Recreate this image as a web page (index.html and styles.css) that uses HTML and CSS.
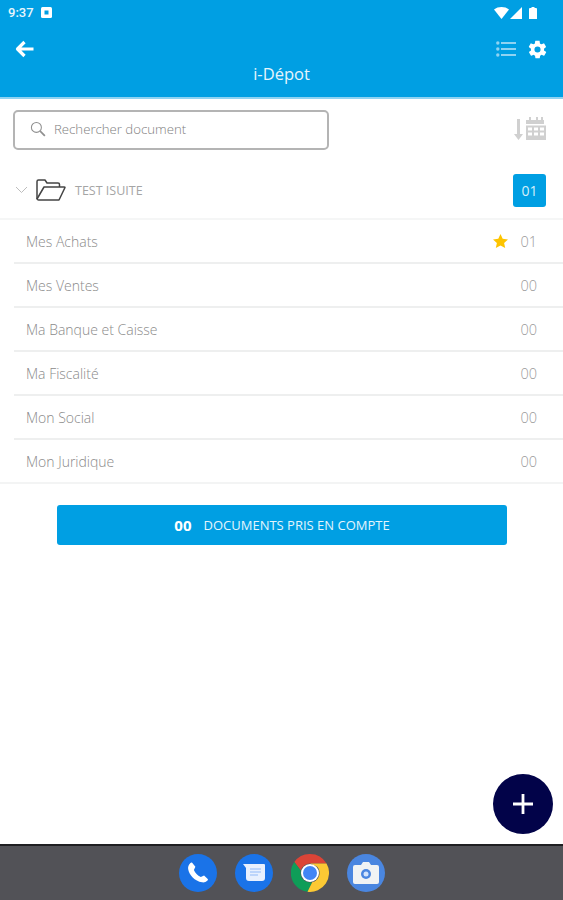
FILE: index.html
```html
<!DOCTYPE html>
<html lang="fr">
<head>
    <meta charset="UTF-8">
    <meta name="viewport" content="width=device-width, initial-scale=1.0">
    <title>i-Dépot</title>
    <link rel="stylesheet" href="styles.css">
</head>
<body>
<div class="page">
    <header class="appbar">
        <div class="statusbar">
            <div class="status-left">
                <span class="clock">9:37</span>
                <svg width="11" height="11" viewBox="0 0 11 11"><rect width="11" height="11" rx="1.5" fill="#fff"/><rect x="3.5" y="3.5" width="4" height="4" fill="#009fe3"/></svg>
            </div>
            <div class="status-right">
                <svg width="15" height="12" viewBox="0 0 15 12"><path d="M0 2.5C4 -.8 11 -.8 15 2.5L7.500 12z" fill="#fff"/></svg>
                <svg class="signal" width="12" height="12" viewBox="0 0 12 12"><path d="M12 0V12H0z" fill="#fff"/></svg>
                <svg width="8" height="12" viewBox="0 0 8 12"><path d="M2.500 0h3v1H7a1 1 0 0 1 1 1v10H0V2a1 1 0 0 1 1-1h1.500z" fill="#fff"/></svg>
            </div>
        </div>
        <div class="toolbar">
            <svg width="20" height="18" viewBox="0 0 20 18"><path d="M18.500 9H3M9.500 2L2.500 9l7 7" fill="none" stroke="#fff" stroke-width="3.200" stroke-linejoin="round"/></svg>
            <div class="toolbar-actions">
                <svg width="20" height="18" viewBox="0 0 20 18" fill="#8fd3f2"><circle cx="1.800" cy="3" r="1.700"/><circle cx="1.800" cy="9" r="1.700"/><circle cx="1.800" cy="15" r="1.700"/><rect x="5" y="2" width="15" height="2"/><rect x="5" y="8" width="15" height="2"/><rect x="5" y="14" width="15" height="2"/></svg>
                <svg width="21" height="21" viewBox="0 0 24 24"><path fill="#fff" d="M19.400 13c.1-.3.100-.7.100-1s0-.7-.1-1l2.100-1.600c.2-.2.300-.4.100-.7l-2-3.500c-.1-.2-.4-.3-.6-.2l-2.500 1c-.5-.4-1.100-.7-1.700-1l-.4-2.600c0-.2-.2-.4-.5-.4h-4c-.2 0-.5.200-.5.400l-.4 2.600c-.6.300-1.200.6-1.700 1l-2.500-1c-.2-.1-.5 0-.6.200l-2 3.500c-.1.300-.1.500.1.700L4.600 11c0 .3-.1.700-.1 1s0 .7.100 1l-2.100 1.600c-.2.200-.3.400-.1.700l2 3.500c.1.200.4.300.6.200l2.500-1c.5.400 1.100.7 1.700 1l.4 2.600c0 .2.300.4.500.4h4c.3 0 .5-.2.500-.4l.4-2.600c.6-.3 1.200-.6 1.700-1l2.500 1c.2.100.5 0 .6-.2l2-3.500c.2-.3.100-.5-.1-.7zM12 15.500a3.500 3.500 0 1 1 0-7 3.500 3.500 0 0 1 0 7z"/></svg>
            </div>
        </div>
        <div class="title">i-Dépot</div>
    </header>

    <main class="content">
        <div class="search-row">
            <div class="search">
                <svg width="16" height="16" viewBox="0 0 17 17" fill="none" stroke="#8f8f8f"><circle cx="6.800" cy="6.800" r="5.300" stroke-width="1.100"/><path d="M10.800 10.800l5 5" stroke-width="1.800"/></svg>
                <span>Rechercher document</span>
            </div>
            <svg class="sort-icon" width="33" height="24" viewBox="0 0 33 24" fill="#d0d0d0"><path d="M4 2h3v15h3l-4.500 6L1 17h3z"/><path d="M14 3h2V0h2v3h5V0h2v3h3V0h2v3h1v4H13V3zM13 8.500h20V23H13zM15 10.500v3h4v-3zm6 0v3h4v-3zm6 0v3h4v-3zm-12 5v3h4v-3zm6 0v3h4v-3zm6 0v3h4v-3z" fill-rule="evenodd"/></svg>
        </div>

        <div class="folder-row">
            <svg width="13" height="8" viewBox="0 0 13 8" fill="none" stroke="#bdbdbd"><path d="M1 1l5.500 5.500L12 1"/></svg>
            <svg class="folder-icon" width="31" height="22" viewBox="0 0 31 22" fill="none" stroke="#444" stroke-width="1.500" stroke-linejoin="round"><path d="M2 20V2.500Q2 1 3.500 1H10l2 3h11q1.500 0 1.500 1.500V8"/><path d="M2 20q.500 1 1.500 1H24l6-12.500Q30 8 29 8H9L2 20z"/></svg>
            <span class="folder-name">TEST ISUITE</span>
            <span class="badge">01</span>
        </div>

        <ul class="list">
            <li><span>Mes Achats</span><svg class="star" width="15" height="14" viewBox="0 0 15 14"><path fill="#fdc400" d="M7.500 0l2.200 4.800 5.300.6-3.900 3.500 1.100 5.100-4.700-2.600L2.800 14l1.100-5.100L0 5.400l5.300-.6z"/></svg><span class="count">01</span></li>
            <li><span>Mes Ventes</span><span class="count">00</span></li>
            <li><span>Ma Banque et Caisse</span><span class="count">00</span></li>
            <li><span>Ma Fiscalité</span><span class="count">00</span></li>
            <li><span>Mon Social</span><span class="count">00</span></li>
            <li><span>Mon Juridique</span><span class="count">00</span></li>
        </ul>

        <button class="total"><b>00</b>DOCUMENTS PRIS EN COMPTE</button>
    </main>

    <button class="fab" aria-label="Ajouter">
        <svg width="22" height="22" viewBox="0 0 22 22"><path d="M11 1v20M1 11h20" stroke="#fff" stroke-width="2.800"/></svg>
    </button>

    <footer class="dock">
        <span class="app app-blue">
            <svg width="26" height="26" viewBox="0 0 24 24"><path fill="#fff" d="M6.600 2.500l3 3.800-1.400 2.900c1 2.600 3.400 5 6.400 6.500l3-1.300 3.400 3.200c.3.400.2 1-.2 1.300-1.400 1.300-3.200 2-5 1.700C9 19.500 3.800 14 2.900 8.300c-.3-2 .6-4 2.100-5.500.4-.5 1.200-.6 1.600-.3z"/></svg>
        </span>
        <span class="app app-blue">
            <svg width="24" height="24" viewBox="0 0 24 24"><path fill="#e8f0fe" d="M1 3h21a1 1 0 0 1 1 1v13a3 3 0 0 1-3 3H7a3 3 0 0 1-3-3V7z"/><path d="M8 8h11M8 11h11M8 14h8" stroke="#aecbfa" stroke-width="1.500"/></svg>
        </span>
        <span class="app app-chrome">
            <svg width="38" height="38" viewBox="0 0 38 38">
                <path fill="#db4437" d="M19 0a19 19 0 0 1 16.500 9.500H19a9.500 9.500 0 0 0-9.200 7L3.300 8A19 19 0 0 1 19 0z"/>
                <path fill="#0f9d58" d="M3.300 8l6.500 8.500a9.500 9.500 0 0 0 11.400 11.700L16.500 37.800A19 19 0 0 1 3.300 8z"/>
                <path fill="#fcc934" d="M35.500 9.500A19 19 0 0 1 16.500 37.800l4.700-9.600A9.500 9.500 0 0 0 26 12.500l-7-3z"/>
                <circle cx="19" cy="19" r="9" fill="#fff"/>
                <circle cx="19" cy="19" r="7" fill="#4285f4"/>
            </svg>
        </span>
        <span class="app app-camera">
            <svg width="26" height="22" viewBox="0 0 26 22"><path fill="#f1f3f4" d="M8 3l2-3h6l2 3h6a2 2 0 0 1 2 2v15a2 2 0 0 1-2 2H2a2 2 0 0 1-2-2V5a2 2 0 0 1 2-2z"/><circle cx="13" cy="12" r="5" fill="#4a86e0"/><circle cx="13" cy="12" r="2.500" fill="#d2e3fc"/></svg>
        </span>
    </footer>
</div>
</body>
</html>
```

FILE: styles.css
```css
* { box-sizing: border-box; }
body { margin: 0; font-family: "Open Sans", sans-serif; color: #9a9a9a; background: #fff; }
ul { list-style: none; margin: 0; padding: 0; }
svg { display: block; flex: none; }

.page { position: relative; height: 900px; display: flex; flex-direction: column; overflow: hidden; }

/* top bar */
.appbar { height: 99px; background: #009fe3; border-bottom: 2px solid #8fd3f2; color: #fff; }
.statusbar { height: 24px; padding: 1px 26px 0 8px; display: flex; justify-content: space-between; align-items: center; }
.status-left { display: flex; align-items: center; gap: 7px; }
.clock { font-family: Roboto, sans-serif; font-size: 13px; font-weight: 500; color: #e8f6fc; }
.status-right { display: flex; align-items: center; gap: 1px; }
.signal { margin-right: 6px; }
.toolbar { height: 24px; margin-top: 13px; padding: 0 15px; display: flex; justify-content: space-between; align-items: center; }
.toolbar-actions { display: flex; align-items: center; gap: 11px; }
.title { margin-top: 2px; text-align: center; font-size: 16.500px; line-height: 22px; color: #e6f5fc; }

.content { flex: 1; }

/* search */
.search-row { height: 62px; padding: 11px 17px 0 13px; display: flex; justify-content: space-between; align-items: flex-start; }
.search { width: 316px; height: 40px; padding: 0 0 2px 15px; border: 2px solid #b4b4b4; border-radius: 5px; display: flex; align-items: center; gap: 8px; font-size: 13.200px; font-weight: 300; color: #808080; }
.sort-icon { margin-top: 7px; }

/* folder */
.folder-row { height: 59px; padding: 1px 17px 0 15px; display: flex; align-items: center; font-size: 12.500px; color: #a5a5a5; border-bottom: 2px solid #f5f6f6; }
.folder-icon { margin-left: 7px; margin-right: 9px; }
.folder-name { flex: 1; }
.badge { width: 33px; height: 33px; border-radius: 3px; background: #009fe3; color: #d5effa; font-size: 14px; display: flex; align-items: center; justify-content: center; }

/* categories */
.list li { height: 44px; margin-left: 14px; padding: 0 26px 0 12px; display: flex; align-items: center; font-size: 14px; font-weight: 300; color: #8a8a8a; border-bottom: 2px solid #eeefef; }
.list li:last-child { margin-left: 0; padding-left: 26px; border-bottom-color: #f3f4f4; }
.list li span:first-child { flex: 1; }
.star { margin-right: 12px; }
.count { font-size: 14.500px; color: #9a9a9a; }

/* total button */
.total { display: flex; align-items: center; justify-content: center; width: 450px; height: 40px; margin: 21px 0 0 57px; border: 0; border-radius: 3px; background: #009fe3; color: #e3f5fd; font-family: "Open Sans", sans-serif; font-size: 13px; font-weight: 500; }
.total b { margin-right: 12px; font-size: 15px; color: #fff; }

.fab { position: absolute; left: 493px; top: 774px; width: 60px; height: 60px; padding: 0; border: 0; border-radius: 50%; background: #020349; display: flex; align-items: center; justify-content: center; }

/* android dock */
.dock { height: 56px; background: #525257; border-top: 2px solid #1f1f22; display: flex; justify-content: center; align-items: center; gap: 18px; }
.app { width: 38px; height: 38px; border-radius: 50%; display: flex; align-items: center; justify-content: center; }
.app-blue { background: #1a73e8; }
.app-camera { background: #4a86e0; }
```
